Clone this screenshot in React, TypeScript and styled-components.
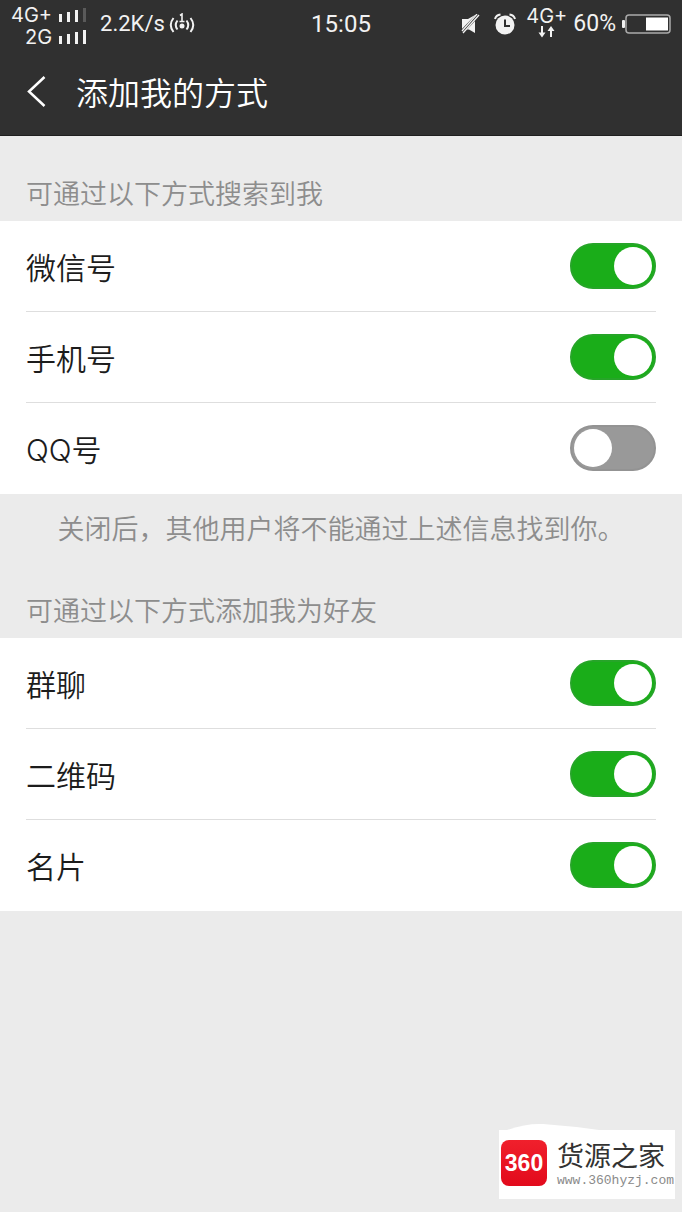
import React from "react";
import styled, { createGlobalStyle } from "styled-components";

const GlobalStyle = createGlobalStyle`
  * { box-sizing: border-box; }
  body {
    margin: 0;
    background: #ebebeb;
    font-family: Roboto, "Noto Sans CJK SC", sans-serif;
  }
`;

const Page = styled.div`
  position: relative;
  min-height: 100vh;
  background: #ebebeb;
`;

const Header = styled.header`
  background: #303030;
  color: #fff;
  border-bottom: 1px solid #1f1f1f;
`;

const StatusBar = styled.div`
  display: grid;
  grid-template-columns: 1fr auto 1fr;
  align-items: center;
  height: 48px;
  padding: 0 11px;
  color: #f2f2f2;
`;

const StatusGroup = styled.div<{ $end?: boolean }>`
  display: flex;
  align-items: center;
  justify-content: ${(p) => (p.$end ? "flex-end" : "flex-start")};
`;

const Networks = styled.div`
  display: flex;
  flex-direction: column;
  align-items: flex-end;
  margin: 4px 14px 0 0;
`;

const Network = styled.div`
  display: flex;
  align-items: center;
  gap: 7px;
  font-family: Inter, sans-serif;
  font-size: 20px;
  line-height: 22px;
`;

const StatusText = styled.span<{ $size: number }>`
  font-size: ${(p) => p.$size}px;
  line-height: 28px;
`;

const StatusIcon = styled.svg<{ $gap: number }>`
  flex: none;
  margin-left: ${(p) => p.$gap}px;
`;

const MobileData = styled.div`
  display: flex;
  flex-direction: column;
  align-items: center;
  margin: 0 6px 0 10px;
  padding-bottom: 4px;
  font-family: Inter, sans-serif;
  font-size: 20px;
  line-height: 20px;
`;

const NavBar = styled.div`
  display: flex;
  align-items: center;
  height: 87px;
  padding: 0 26px;
  gap: 29px;
`;

const BackButton = styled.button`
  display: flex;
  padding: 0;
  border: 0;
  background: none;
  color: inherit;
`;

const Title = styled.h1`
  margin: 0;
  padding-top: 4px;
  font-size: 32px;
  font-weight: 350;
  line-height: 48px;
`;

const SectionTitle = styled.h2<{ $first?: boolean }>`
  margin: 0;
  padding: ${(p) => (p.$first ? 40 : 28)}px 26px 6px;
  color: #8d8d8d;
  font-size: 27px;
  font-weight: 350;
  line-height: 39px;
`;

const List = styled.div`
  padding: 0 26px;
  background: #fff;
`;

const Row = styled.label`
  display: flex;
  align-items: center;
  justify-content: space-between;
  height: 91px;
  border-bottom: 1px solid #dedede;
  color: #1c1c1c;
  font-family: Inter, "Noto Sans CJK SC", sans-serif;
  font-size: 30px;
  font-weight: 350;
  &:last-child { border-bottom-color: transparent; }
`;

const Switch = styled.input`
  appearance: none;
  display: flex;
  align-items: center;
  width: 86px;
  height: 46px;
  margin: 0;
  padding: 0 2px;
  border: 2px solid #939393;
  border-radius: 23px;
  background: #999;
  &::before {
    content: "";
    width: 38px;
    height: 38px;
    border-radius: 50%;
    background: #fff;
  }
  &:checked {
    justify-content: flex-end;
    border-color: #26a528;
    background: #1aad19;
  }
`;

const Note = styled.p`
  margin: 0;
  padding: 17px 0 15px;
  color: #8d8d8d;
  font-size: 27px;
  font-weight: 350;
  line-height: 39px;
  text-align: center;
  white-space: nowrap;
`;

const Watermark = styled.aside`
  position: absolute;
  right: 7px;
  bottom: 13px;
  display: flex;
  align-items: center;
  gap: 10px;
  width: 176px;
  height: 69px;
  padding: 0 0 3px 2px;
  background: #fff;
`;

const Swell = styled.svg`
  position: absolute;
  left: 0;
  bottom: 100%;
`;

const Badge = styled.div`
  flex: none;
  width: 46px;
  height: 46px;
  border-radius: 8px;
  background: linear-gradient(#f0202c, #e20a1c);
  color: #fff;
  font: bold 23px/46px "Liberation Sans", sans-serif;
  text-align: center;
`;

const Brand = styled.div`
  display: flex;
  flex-direction: column;
  padding-top: 3px;
  color: #333;
  font-size: 27px;
  font-weight: 400;
  line-height: 32px;
`;

const Site = styled.a`
  color: #8a8a8a;
  font: 13px/16px "Liberation Mono", monospace;
  text-decoration: none;
`;

const Signal = ({ weak = false }: { weak?: boolean }) => (
  <svg width="27" height="16" viewBox="0 0 27 16" fill="#f2f2f2" aria-hidden="true">
    <rect x="0" y="7" width="3" height="8" />
    <rect x="8" y="5" width="3" height="10" />
    <rect x="16" y="3" width="3" height="12" />
    <rect x="24" y="1" width="3" height="14" fill={weak ? "#5a5a5a" : "#f2f2f2"} />
  </svg>
);

const Setting = ({ name, on = true }: { name: string; on?: boolean }) => (
  <Row>
    {name}
    <Switch type="checkbox" role="switch" defaultChecked={on} />
  </Row>
);

export default function App() {
  return (
    <Page>
      <GlobalStyle />
      <Header>
        <StatusBar>
          <StatusGroup>
            <Networks>
              <Network>4G+<Signal weak /></Network>
              <Network>2G<Signal /></Network>
            </Networks>
            <StatusText $size={22}>2.2K/s</StatusText>
            <StatusIcon $gap={4} width="26" height="22" viewBox="0 0 26 22" fill="none" stroke="#f2f2f2" strokeWidth="2" aria-hidden="true">
              <path d="M4.500 5Q-1 12 4.500 19M8.500 7.500Q5 12 8.500 16.500M21.500 5Q27 12 21.500 19M17.500 7.500Q21 12 17.500 16.500" />
              <path d="M11 2.500L13 1V8.500M10.500 8.500H15.500" strokeWidth="1.600" />
              <circle cx="13" cy="13" r="2.500" fill="#f2f2f2" stroke="none" />
            </StatusIcon>
          </StatusGroup>
          <StatusText $size={24}>15:05</StatusText>
          <StatusGroup $end>
            <StatusIcon $gap={0} width="19" height="21" viewBox="0 0 19 21" aria-hidden="true">
              <path d="M1 5H7L14 1V19L8 15.500H1Z" fill="#f2f2f2" />
              <path d="M0 19L18 0" stroke="#303030" strokeWidth="4" />
              <path d="M1 17L16 0M2 19L18 1" stroke="#f2f2f2" strokeWidth="1.300" />
            </StatusIcon>
            <StatusIcon $gap={14} width="22" height="22" viewBox="0 0 22 22" fill="none" aria-hidden="true">
              <circle cx="11" cy="12" r="9.500" fill="#f2f2f2" />
              <path d="M1 6Q2 2 6.500 1.500M21 6Q20 2 15.500 1.500" stroke="#f2f2f2" strokeWidth="2" />
              <path d="M11 6.500V13H16" stroke="#303030" strokeWidth="2" />
            </StatusIcon>
            <MobileData>
              4G+
              <svg width="17" height="12" viewBox="0 0 17 12" fill="none" stroke="#f2f2f2" strokeWidth="2" aria-hidden="true">
                <path d="M4 0V9M13 11V3" />
                <path d="M0.500 6.500H7.500L4 11.500ZM9.500 5H16.500L13 0Z" fill="#f2f2f2" stroke="none" />
              </svg>
            </MobileData>
            <StatusText $size={23}>60%</StatusText>
            <StatusIcon $gap={6} width="49" height="20" viewBox="0 0 49 20" aria-hidden="true">
              <rect x="0" y="6" width="3" height="8" rx="1" fill="#f2f2f2" />
              <rect x="4" y="1" width="44" height="18" rx="3" fill="none" stroke="#aaa" strokeWidth="1.500" />
              <rect x="24" y="3.500" width="22" height="13" fill="#fff" />
            </StatusIcon>
          </StatusGroup>
        </StatusBar>
        <NavBar>
          <BackButton type="button" aria-label="返回">
            <svg width="21" height="34" viewBox="0 0 21 34" fill="none" stroke="#fff" strokeWidth="2.500">
              <path d="M18.500 2L3 16.500L18.500 31" />
            </svg>
          </BackButton>
          <Title>添加我的方式</Title>
        </NavBar>
      </Header>
      <main>
        <SectionTitle $first>可通过以下方式搜索到我</SectionTitle>
        <List>
          <Setting name="微信号" />
          <Setting name="手机号" />
          <Setting name="QQ号" on={false} />
        </List>
        <Note>关闭后，其他用户将不能通过上述信息找到你。</Note>
        <SectionTitle>可通过以下方式添加我为好友</SectionTitle>
        <List>
          <Setting name="群聊" />
          <Setting name="二维码" />
          <Setting name="名片" />
        </List>
      </main>
      <Watermark>
        <Swell width="110" height="7" viewBox="0 0 110 7" fill="#fff" aria-hidden="true">
          <path d="M8 7Q28 0 44 1Q72 3 100 7Z" />
        </Swell>
        <Badge>360</Badge>
        <Brand>
          货源之家
          <Site href="#">www.360hyzj.com</Site>
        </Brand>
      </Watermark>
    </Page>
  );
}
